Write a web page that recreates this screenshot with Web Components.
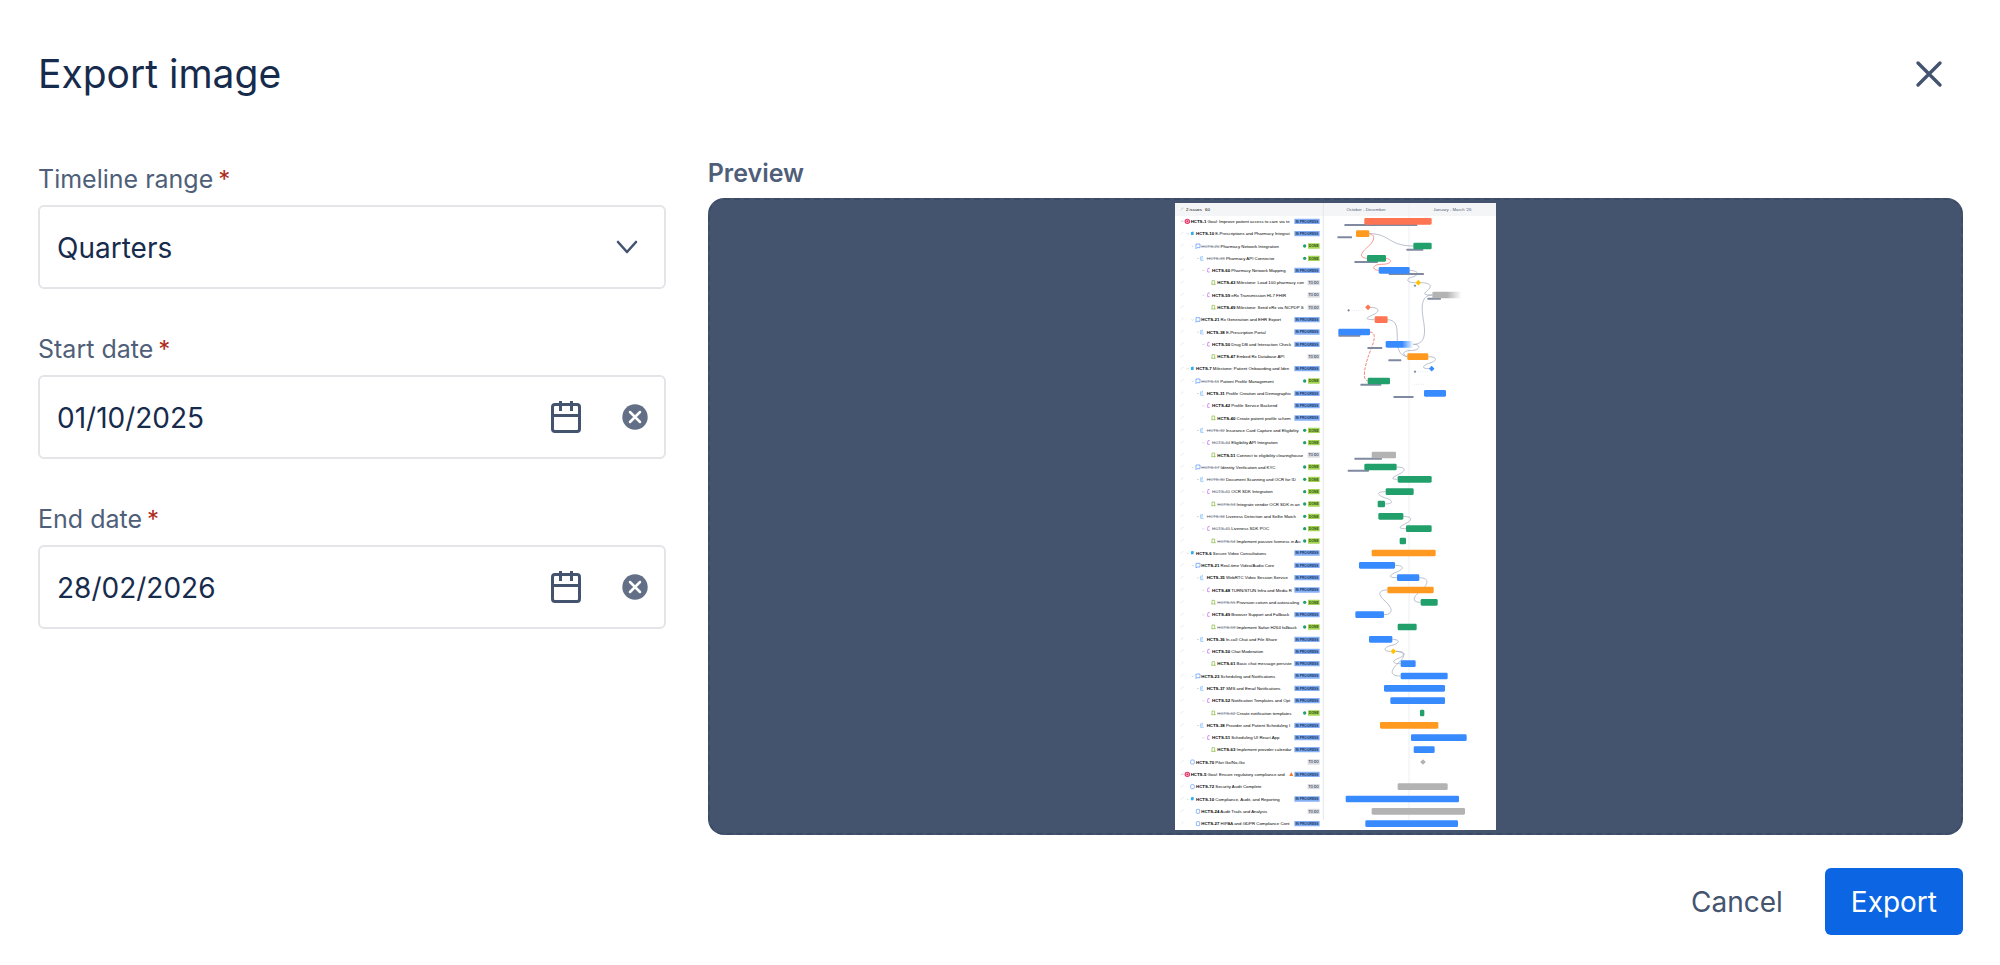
<!DOCTYPE html>
<html lang="en">
<head>
<meta charset="utf-8">
<meta name="viewport" content="width=device-width, initial-scale=1">
<title>Export image</title>
<style>
  body { margin: 0; background: #fff; color: #172b4d; font-family: Inter, "Liberation Sans", sans-serif; }
</style>
</head>
<body>
<export-dialog heading="Export image">
  <select-field slot="fields" label="Timeline range" options="Quarters,Months,Weeks"></select-field>
  <date-field slot="fields" label="Start date" value="01/10/2025"></date-field>
  <date-field slot="fields" label="End date" value="28/02/2026"></date-field>
  <preview-frame slot="preview" label="Preview"><timeline-picture></timeline-picture></preview-frame>
  <dialog-button slot="actions">Cancel</dialog-button>
  <dialog-button slot="actions" primary>Export</dialog-button>
</export-dialog>

<script>
class BaseElement extends HTMLElement {
  connectedCallback() {
    if (this.shadowRoot) return;
    this.attachShadow({ mode: 'open' }).innerHTML = this.render();
    this.ready();
  }
  ready() {}
}

customElements.define('export-dialog', class extends BaseElement {
  render() {
    return `
    <style>
      :host { display: block; padding: 44px 37px 30px 38px; }
      header { display: flex; justify-content: space-between; align-items: center; height: 60px; }
      h1 { margin: 0; font-size: 39px; line-height: 48px; font-weight: 400; color: #172b4d; }
      .close { display: flex; align-items: center; justify-content: center; width: 68px; height: 58px; padding: 0; border: 0; background: none; color: #44546f; }
      .body { display: grid; grid-template-columns: 1fr 2fr; column-gap: 42px; margin-top: 53px; }
      .fields { display: flex; flex-direction: column; gap: 44px; padding-top: 6px; }
      .preview { min-width: 0; }
      footer { display: flex; justify-content: flex-end; gap: 16px; margin-top: 33px; }
    </style>
    <header>
      <h1>${this.getAttribute('heading')}</h1>
      <button class="close" type="button" aria-label="Close">
        <svg width="30" height="30" viewBox="0 0 30 30" fill="none" stroke="currentColor" stroke-width="3.4" stroke-linecap="round"><path d="M4 4 26 26M26 4 4 26"/></svg>
      </button>
    </header>
    <div class="body">
      <div class="fields"><slot name="fields"></slot></div>
      <div class="preview"><slot name="preview"></slot></div>
    </div>
    <footer><slot name="actions"></slot></footer>`;
  }
});

const fieldStyles = `
  :host { display: block; }
  label { display: block; font-size: 25px; line-height: 32px; margin-bottom: 10px; color: #505f79; }
  .star { color: #ae2a19; margin-left: 5px; font-size: 24px; line-height: 24px; }
  .box { display: flex; align-items: center; box-sizing: border-box; height: 84px; border: 2px solid #e4e5e8; border-radius: 6px; background: #fff; }
  select, input { flex: 1; min-width: 0; height: 100%; padding: 2px 0 0 17px; border: 0; outline: 0; background: none; appearance: none; font: 400 28px/36px Inter, "Liberation Sans", sans-serif; color: #172b4d; }
  button { display: flex; align-items: center; padding: 0; border: 0; background: none; color: #44546f; }
`;

customElements.define('select-field', class extends BaseElement {
  render() {
    const options = this.getAttribute('options').split(',').map(o => `<option>${o}</option>`).join('');
    return `
    <style>${fieldStyles}
      .box { display: grid; }
      select, svg { grid-area: 1 / 1; }
      svg { justify-self: end; margin-right: 26px; pointer-events: none; color: #44546f; }
    </style>
    <label for="control">${this.getAttribute('label')}<span class="star">*</span></label>
    <div class="box">
      <select id="control">${options}</select>
      <svg width="22" height="14" viewBox="0 0 22 14" fill="none" stroke="currentColor" stroke-width="2.6" stroke-linecap="round" stroke-linejoin="round"><path d="M2 2 11 12 20 2"/></svg>
    </div>`;
  }
});

customElements.define('date-field', class extends BaseElement {
  render() {
    return `
    <style>${fieldStyles}
      .clear { margin: 0 16px 0 40px; }
    </style>
    <label for="control">${this.getAttribute('label')}<span class="star">*</span></label>
    <div class="box">
      <input id="control" type="text" value="${this.getAttribute('value')}">
      <button class="open" type="button" aria-label="Open calendar">
        <svg width="32" height="34" viewBox="0 0 32 34" fill="none" stroke="currentColor" stroke-width="3"><rect x="2.5" y="4.5" width="27" height="27" rx="2.5"/><path d="M2.5 15.5H29.5M10.5 1V11M21.5 1V11"/></svg>
      </button>
      <button class="clear" type="button" aria-label="Clear">
        <svg width="26" height="26" viewBox="0 0 26 26"><circle cx="13" cy="13" r="12.7" fill="#626f86"/><path d="M8 8 18 18M18 8 8 18" stroke="#fff" stroke-width="2.5" stroke-linecap="round"/></svg>
      </button>
    </div>`;
  }
  ready() {
    const input = this.shadowRoot.querySelector('input');
    this.shadowRoot.querySelector('.clear').addEventListener('click', () => { input.value = ''; });
  }
});

customElements.define('dialog-button', class extends BaseElement {
  render() {
    return `
    <style>
      :host { display: block; }
      button { height: 67px; padding: 0 26px; border: 0; border-radius: 6px; background: none; color: #44546f; font: 400 28px/36px Inter, "Liberation Sans", sans-serif; }
      :host([primary]) button { background: #0c66e4; color: #fff; }
    </style>
    <button type="button"><slot></slot></button>`;
  }
});

customElements.define('preview-frame', class extends BaseElement {
  render() {
    return `
    <style>
      :host { display: block; }
      h2 { margin: 0 0 9px; font-size: 25px; line-height: 32px; font-weight: 600; color: #505f79; }
      .frame { display: flex; justify-content: center; box-sizing: border-box; padding: 3px; border: 2px dashed #3b4a66; border-radius: 16px; background: #44546f; }
    </style>
    <h2>${this.getAttribute('label')}</h2>
    <div class="frame"><slot></slot></div>`;
  }
});

/* Each row: level, key, summary, status (P in progress, D done, T to do),
   bar [colour, start, end], baseline [start, end].
   A bar with a single position is a milestone. */
const ROWS = [
  [0,'HCTS-1','Goal: Improve patient access to care via te','P',['r',568,770],[508,727]],
  [1,'HCTS-10','E-Prescriptions and Pharmacy Integrat','P',['o',543,583],[487,531]],
  [2,'HCTS-20','Pharmacy Network Integration','D',['g',715,770],[694,745]],
  [3,'HCTS-33','Pharmacy API Connector','D',['g',576,633],[538,609]],
  [4,'HCTS-60','Pharmacy Network Mapping','P',['b',611,704],[641,747]],
  [5,'HCTS-43','Milestone: Load 100 pharmacy con','T',['y',730],[720]],
  [4,'HCTS-59','eRx Transmission HL7 FHIR','T',['fadeGray',772,860],[757,798]],
  [5,'HCTS-49','Milestone: Send eRx via NCPDP S','T',['r',579],[521]],
  [2,'HCTS-21','Rx Generation and EHR Export','P',['r',599,638]],
  [3,'HCTS-38','E-Prescription Portal','P',['b',490,585],[490,556]],
  [4,'HCTS-50','Drug DB and Interaction Check','P',['fadeBlue',632,715],[577,622]],
  [5,'HCTS-47','Embed Rx Database API','T',['o',697,760],[640,679]],
  [1,'HCTS-7','Milestone: Patient Onboarding and Iden','P',['b',770],[720]],
  [2,'HCTS-11','Patient Profile Management','D',['g',578,645],[556,619]],
  [3,'HCTS-31','Profile Creation and Demographic','P',['b',747,813],[655,716]],
  [4,'HCTS-42','Profile Service Backend','P'],
  [5,'HCTS-40','Create patient profile schem','P'],
  [3,'HCTS-32','Insurance Card Capture and Eligibility','D'],
  [4,'HCTS-44','Eligibility API Integration','D'],
  [5,'HCTS-51','Connect to eligibility clearinghouse','T',['a',590,663],[538,621]],
  [2,'HCTS-17','Identity Verification and KYC','D',['g',568,665],[518,582]],
  [3,'HCTS-30','Document Scanning and OCR for ID','D',['g',668,770]],
  [4,'HCTS-41','OCR SDK Integration','D',['g',632,716]],
  [5,'HCTS-53','Integrate vendor OCR SDK in an','D',['g',608,630]],
  [3,'HCTS-34','Liveness Detection and Selfie Match','D',['g',610,685]],
  [4,'HCTS-45','Liveness SDK POC','D',['g',693,770]],
  [5,'HCTS-54','Implement passive liveness in Au','D',['g',674,693]],
  [1,'HCTS-6','Secure Video Consultations','P',['o',590,782]],
  [2,'HCTS-21','Real-time Video/Audio Core','P',['b',552,660]],
  [3,'HCTS-35','WebRTC Video Session Service','P',['b',666,733]],
  [4,'HCTS-48','TURN/STUN Infra and Media R','P',['o',637,776]],
  [5,'HCTS-55','Provision coturn and autoscaling','D',['g',737,788]],
  [4,'HCTS-49','Browser Support and Fallback','P',['b',541,627]],
  [5,'HCTS-59','Implement Safari H264 fallback','D',['g',668,725]],
  [3,'HCTS-36','In-call Chat and File Share','P',['b',582,652]],
  [4,'HCTS-50','Chat Moderation','P',['y',655]],
  [5,'HCTS-61','Basic chat message persiste','P',['b',677,722]],
  [2,'HCTS-23','Scheduling and Notifications','P',['b',677,818]],
  [3,'HCTS-37','SMS and Email Notifications','P',['b',627,810]],
  [4,'HCTS-52','Notification Templates and Opt','P',['b',646,810]],
  [5,'HCTS-62','Create notification templates','D',['g',735,748]],
  [3,'HCTS-38','Provider and Patient Scheduling I','P',['o',615,790]],
  [4,'HCTS-51','Scheduling UI React App','P',['b',708,875]],
  [5,'HCTS-63','Implement provider calendar','P',['b',716,779]],
  [6,'HCTS-70','Pilot Go/No-Go','T',['a',744]],
  [0,'HCTS-5','Goal: Ensure regulatory compliance and','W'],
  [6,'HCTS-72','Security Audit Complete','T',['a',668,818]],
  [1,'HCTS-10','Compliance, Audit, and Reporting','P',['b',512,852]],
  [7,'HCTS-24','Audit Trails and Analysis','T',['a',590,870]],
  [7,'HCTS-27','HIPAA and GDPR Compliance Cont','P',['b',571,849]],
];
const COLOURS = { r:'#ff7452', o:'#ff991f', g:'#22a06b', b:'#388bff', a:'#b3b3b3', y:'#ffc400', fadeGray:'url(#fade-gray)', fadeBlue:'url(#fade-blue)' };
const TEXT_X = [47, 63, 79, 95, 111, 127, 63, 79];
const LINKS = [
  'M583 92C645 92 640 129 715 129',
  'M704 202C737 204 730 218 712 222S690 239 722 239',
  'M738 239C772 240 770 252 758 262S742 276 772 276',
  'M587 313C620 315 610 328 595 335S560 350 599 350',
  'M638 350C695 352 638 452 697 461',
  'M715 424C756 424 750 380 745 350S735 276 772 276',
  'M715 424C740 424 735 442 712 442S675 452 697 461',
  'M760 461C790 462 785 474 765 480S735 497 762 497',
  'M665 792C697 793 690 804 675 812S638 829 668 829',
  'M630 903C662 902 650 890 632 885S595 866 632 866',
  'M685 940C715 941 710 952 695 960S660 977 693 977',
  'M660 1087C692 1088 684 1099 667 1106S630 1124 666 1124',
  'M733 1124C768 1125 757 1147 738 1162S704 1198 737 1198',
  'M627 1235C662 1234 647 1208 630 1194S604 1161 637 1161',
  'M652 1309C680 1310 672 1322 650 1327S620 1345 647 1345',
  'M663 1345C698 1346 690 1358 670 1366S650 1382 677 1382',
  'M663 1345C705 1348 680 1370 665 1385S640 1419 677 1419',
];
const CRITICAL_LINKS = [
  'M583 92C606 96 595 118 578 132S548 164 576 166',
  'M633 166C655 170 650 184 620 184S590 202 611 202',
];

function issueIcon(level, y) {
  switch (level) {
    case 0: return `<circle cx="37" cy="${y}" r="8" fill="#e2255e"/><circle cx="37" cy="${y}" r="4" fill="none" stroke="#fff" stroke-width="2"/>`;
    case 1: return `<path d="M48 ${y-5}h4l2-2 2 2v9h-8z" fill="#2bb0f5"/>`;
    case 2: return `<path d="M63 ${y-6}h12v11h-9l-3 3z" fill="none" stroke="#4c8dff" stroke-width="2"/>`;
    case 3: return `<path d="M77 ${y-6}v12h9M81 ${y+3}v-9h3" fill="none" stroke="#6cb4fa" stroke-width="2"/>`;
    case 4: return `<path d="M104 ${y-6}h-5q-2 6-1 11h6" fill="none" stroke="#bf5af2" stroke-width="2"/>`;
    case 5: return `<path d="M111 ${y+5}v-11h8v11h2h-12" fill="none" stroke="#82b536" stroke-width="2"/>`;
    case 6: return `<rect x="47" y="${y-6}" width="11" height="12" rx="3" fill="none" stroke="#5a96f2" stroke-width="2"/>`;
    default: return `<rect x="64" y="${y-6}" width="10" height="12" rx="2" fill="none" stroke="#5a96f2" stroke-width="2"/>`;
  }
}

function statusBadge(status, y) {
  const box = (x, w, fill, colour, text) =>
    `<rect x="${x}" y="${y-8}" width="${w}" height="16" rx="1" fill="${fill}"/><text class="badge" x="${x + w/2}" y="${y+4}" fill="${colour}">${text}</text>`;
  if (status === 'D') return `<circle cx="389" cy="${y}" r="5" fill="#22a06b"/>` + box(399, 35, '#a3d654', '#2f4a10', 'DONE');
  if (status === 'T') return box(398, 36, '#dddee1', '#44546f', 'TO DO');
  const warning = status === 'W' ? `<path d="M349 ${y-7}l6 12h-12z" fill="#f47a2a"/>` : '';
  return warning + box(358, 76, '#85b0f5', '#123263', 'IN PROGRESS');
}

function diamond(x, y, r, fill) {
  return `<rect x="${x-r}" y="${y-r}" width="${2*r}" height="${2*r}" rx="1" transform="rotate(45 ${x} ${y})" fill="${fill}"/>`;
}

function drawRow([level, key, summary, status, bar, baseline], index) {
  const y = Math.round(55 + index * 36.87);
  let out = `<path d="M17 ${y+3}l6-7M22 ${y-4}h4" stroke="#c3c7ce" stroke-width="1" fill="none"/>`;
  if (level < 5) out += `<path d="M${[19,35,50,66,82][level]} ${y-1}l3 3 3-3" stroke="#7a869a" stroke-width="1" fill="none"/>`;
  out += issueIcon(level, y);
  out += `<text x="${TEXT_X[level]}" y="${y+5}"><tspan class="${status === 'D' ? 'done' : 'key'}">${key}</tspan> ${summary}</text>`;
  out += statusBadge(status, y);
  if (baseline) out += baseline.length === 2
    ? `<rect x="${baseline[0]}" y="${y+8}" width="${baseline[1]-baseline[0]}" height="6" rx="2" fill="#7f89a0"/>`
    : diamond(baseline[0], y + 9, 3, '#7f89a0');
  if (bar) out += bar.length === 3
    ? `<rect x="${bar[1]}" y="${y-10}" width="${bar[2]-bar[1]}" height="20" rx="4" fill="${COLOURS[bar[0]]}"/>`
    : diamond(bar[1], y, 6, COLOURS[bar[0]]);
  return out;
}

customElements.define('timeline-picture', class extends BaseElement {
  render() {
    const paths = (list, colour, extra = '') => list.map(d => `<path d="${d}" fill="none" stroke="${colour}" stroke-width="2" ${extra}/>`).join('');
    return `
    <style>
      :host { display: block; }
      svg { display: block; height: 627px; background: #fff; }
      text { font: 400 13px "Liberation Sans", Inter, sans-serif; }
      .key { font-weight: 700; }
      .done { fill: #6b7487; text-decoration: line-through; }
      .head { fill: #505f79; text-anchor: middle; }
      .badge { font-size: 10px; font-weight: 700; text-anchor: middle; }
    </style>
    <svg viewBox="0 0 963 1881" role="img" aria-label="Timeline preview">
      <defs>
        <linearGradient id="fade-gray"><stop offset=".5" stop-color="#b3b3b3"/><stop offset="1" stop-color="#b3b3b3" stop-opacity="0"/></linearGradient>
        <linearGradient id="fade-blue"><stop offset=".6" stop-color="#388bff"/><stop offset="1" stop-color="#388bff" stop-opacity="0"/></linearGradient>
      </defs>
      <rect width="963" height="39" fill="#f4f5f7"/>
      <path d="M445 0V1850" stroke="#e4e6ea" stroke-width="3"/>
      <path d="M702 0V1850" stroke="#eeeff2" stroke-width="3"/>
      <path d="M17 22l6-7M22 15h4" stroke="#8590a2" fill="none"/>
      <text x="33" y="23">2 issues</text><text x="90" y="23">60</text>
      <text class="head" x="573" y="23">October - December</text>
      <text class="head" x="832" y="23">January - March '26</text>
      ${paths(LINKS, '#97a0b3')}
      ${paths(CRITICAL_LINKS, '#f0685c')}
      ${paths(['M585 387C612 390 590 430 580 460S560 530 578 534'], '#e5483c', 'stroke-dasharray="9 4"')}
      ${paths(['M530 322H572', 'M729 506H762', 'M717 544H747'], '#c9cdd5', 'stroke-dasharray="2 5"')}
      ${ROWS.map(drawRow).join('')}
    </svg>`;
  }
});
</script>
</body>
</html>
